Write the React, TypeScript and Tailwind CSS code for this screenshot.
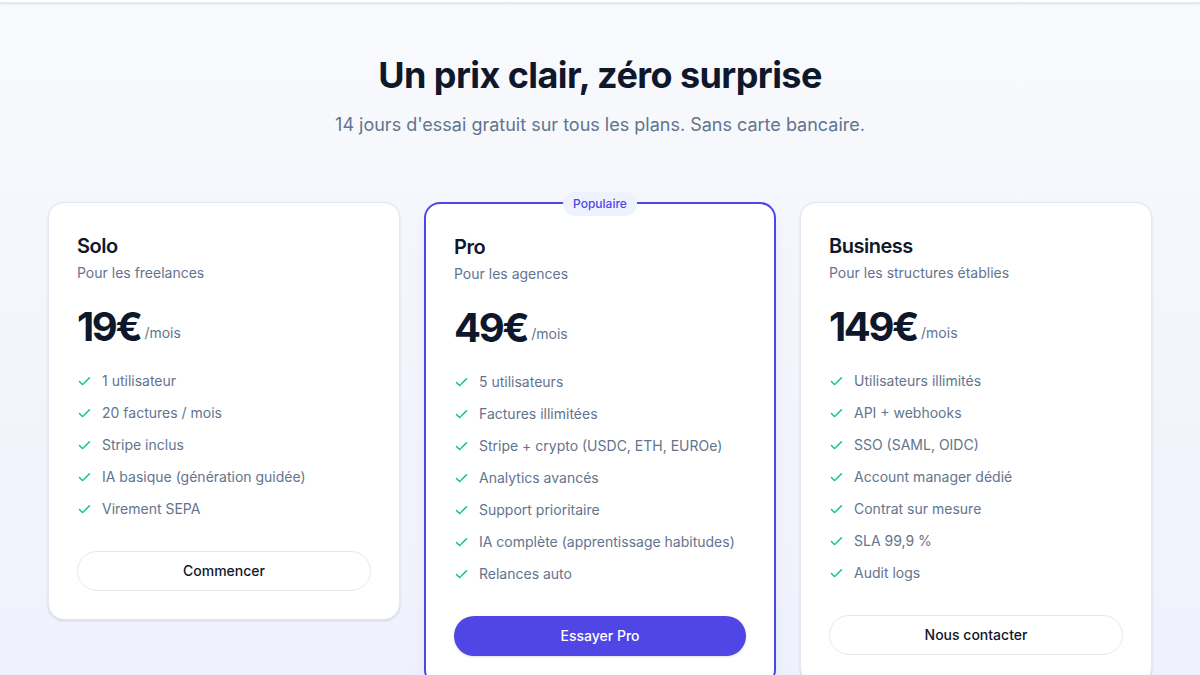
import React from "react";
import { Check } from "lucide-react";

type Plan = {
  name: string;
  tagline: string;
  price: string;
  features: string[];
  cta: string;
  featured?: boolean;
};

const plans: Plan[] = [
  {
    name: "Solo",
    tagline: "Pour les freelances",
    price: "19€",
    features: ["1 utilisateur", "20 factures / mois", "Stripe inclus", "IA basique (génération guidée)", "Virement SEPA"],
    cta: "Commencer",
  },
  {
    name: "Pro",
    tagline: "Pour les agences",
    price: "49€",
    features: [
      "5 utilisateurs",
      "Factures illimitées",
      "Stripe + crypto (USDC, ETH, EUROe)",
      "Analytics avancés",
      "Support prioritaire",
      "IA complète (apprentissage habitudes)",
      "Relances auto",
    ],
    cta: "Essayer Pro",
    featured: true,
  },
  {
    name: "Business",
    tagline: "Pour les structures établies",
    price: "149€",
    features: [
      "Utilisateurs illimités",
      "API + webhooks",
      "SSO (SAML, OIDC)",
      "Account manager dédié",
      "Contrat sur mesure",
      "SLA 99,9 %",
      "Audit logs",
    ],
    cta: "Nous contacter",
  },
];

const display = "font-['Inter','Noto_Sans',sans-serif]";

function PlanCard({ plan }: { plan: Plan }) {
  return (
    <div
      className={
        plan.featured
          ? "relative rounded-2xl border-2 border-[#4f46e5] bg-white p-7 pt-[29px] shadow-lg shadow-indigo-100"
          : "relative rounded-2xl border border-slate-200 bg-white p-7 pt-[29px] shadow-sm"
      }
    >
      {plan.featured ? (
        <span className="absolute -top-3 left-1/2 -translate-x-1/2 rounded-full bg-[#eef2ff] px-2.5 py-1 text-xs leading-4 font-medium text-[#4f46e5]">
          Populaire
        </span>
      ) : null}
      <h3 className={`${display} text-xl leading-7 font-semibold tracking-tight text-slate-900`}>{plan.name}</h3>
      <p className="mt-[3px] text-sm leading-5 text-slate-500">{plan.tagline}</p>
      <div className="mt-6 flex items-end gap-1">
        <span className={`${display} text-[40px] leading-10 font-bold tracking-[-0.06em] text-slate-900`}>{plan.price}</span>
        <span className="mb-1 text-sm leading-5 text-slate-500">/mois</span>
      </div>
      <ul className="mt-6 space-y-3">
        {plan.features.map((f) => (
          <li key={f} className="flex items-center gap-2.5 text-sm leading-5 text-slate-500">
            <Check size={15} strokeWidth={2.2} className="shrink-0 text-emerald-500" />
            {f}
          </li>
        ))}
      </ul>
      <button
        className={
          plan.featured
            ? "mt-8 h-10 w-full rounded-full bg-[#4f46e5] text-sm font-medium text-white shadow-sm"
            : "mt-8 h-10 w-full rounded-full border border-slate-200 bg-white text-sm font-medium text-slate-900"
        }
      >
        {plan.cta}
      </button>
    </div>
  );
}

export default function App() {
  return (
    <div className="min-h-[675px] overflow-hidden bg-gradient-to-b from-[#f8fafc] to-[#eef0fd] font-['Inter','Noto_Sans',sans-serif]">
      <div className="h-[3px] border-b border-slate-200 bg-white shadow-sm" />
      <section className="mx-auto max-w-6xl px-6 pt-[52px] pb-16">
        <div className="text-center">
          <h2 className={`${display} text-4xl leading-10 font-bold tracking-[-0.016em] text-slate-900`}>
            Un prix clair, zéro surprise
          </h2>
          <p className="mt-4 text-lg leading-7 text-slate-500">14 jours d'essai gratuit sur tous les plans. Sans carte bancaire.</p>
        </div>
        <div className="mt-[63px] grid grid-cols-3 items-start gap-6">
          {plans.map((p) => (
            <PlanCard key={p.name} plan={p} />
          ))}
        </div>
      </section>
    </div>
  );
}
